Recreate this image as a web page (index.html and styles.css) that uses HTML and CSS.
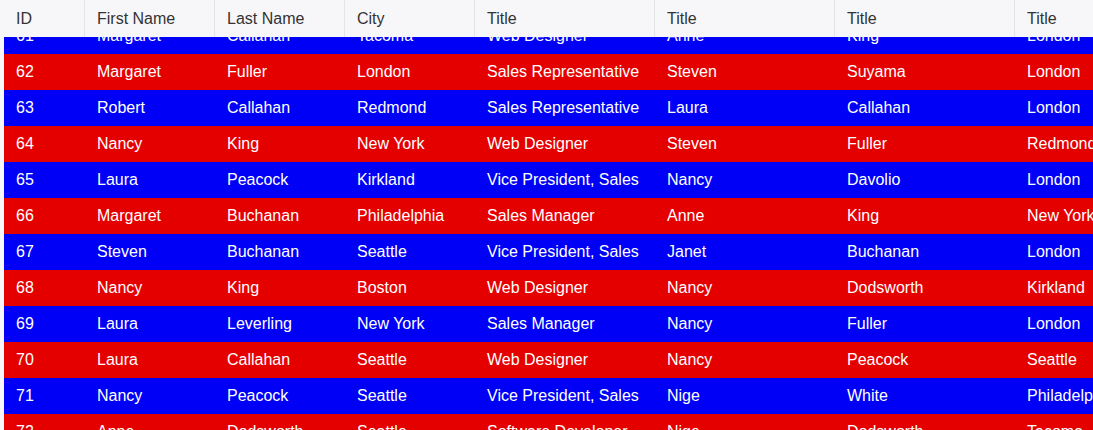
FILE: index.html
```html
<!DOCTYPE html>
<html>
<head>
<meta charset="utf-8">
<link rel="stylesheet" href="styles.css">
</head>
<body>
<div class="grid">
  <div class="head">
    <div class="hc">ID</div><div class="hc">First Name</div><div class="hc">Last Name</div><div class="hc">City</div><div class="hc">Title</div><div class="hc">Title</div><div class="hc">Title</div><div class="hc">Title</div>
  </div>
  <div class="viewport">
    <div class="rows">
      <div class="row blue"><div>61</div><div>Margaret</div><div>Callahan</div><div>Tacoma</div><div>Web Designer</div><div>Anne</div><div>King</div><div>London</div></div>
      <div class="row red"><div>62</div><div>Margaret</div><div>Fuller</div><div>London</div><div>Sales Representative</div><div>Steven</div><div>Suyama</div><div>London</div></div>
      <div class="row blue"><div>63</div><div>Robert</div><div>Callahan</div><div>Redmond</div><div>Sales Representative</div><div>Laura</div><div>Callahan</div><div>London</div></div>
      <div class="row red"><div>64</div><div>Nancy</div><div>King</div><div>New York</div><div>Web Designer</div><div>Steven</div><div>Fuller</div><div>Redmond</div></div>
      <div class="row blue"><div>65</div><div>Laura</div><div>Peacock</div><div>Kirkland</div><div>Vice President, Sales</div><div>Nancy</div><div>Davolio</div><div>London</div></div>
      <div class="row red"><div>66</div><div>Margaret</div><div>Buchanan</div><div>Philadelphia</div><div>Sales Manager</div><div>Anne</div><div>King</div><div>New York</div></div>
      <div class="row blue"><div>67</div><div>Steven</div><div>Buchanan</div><div>Seattle</div><div>Vice President, Sales</div><div>Janet</div><div>Buchanan</div><div>London</div></div>
      <div class="row red"><div>68</div><div>Nancy</div><div>King</div><div>Boston</div><div>Web Designer</div><div>Nancy</div><div>Dodsworth</div><div>Kirkland</div></div>
      <div class="row blue"><div>69</div><div>Laura</div><div>Leverling</div><div>New York</div><div>Sales Manager</div><div>Nancy</div><div>Fuller</div><div>London</div></div>
      <div class="row red"><div>70</div><div>Laura</div><div>Callahan</div><div>Seattle</div><div>Web Designer</div><div>Nancy</div><div>Peacock</div><div>Seattle</div></div>
      <div class="row blue"><div>71</div><div>Nancy</div><div>Peacock</div><div>Seattle</div><div>Vice President, Sales</div><div>Nige</div><div>White</div><div>Philadelphia</div></div>
      <div class="row red"><div>72</div><div>Anne</div><div>Dodsworth</div><div>Seattle</div><div>Software Developer</div><div>Nige</div><div>Dodsworth</div><div>Tacoma</div></div>
    </div>
  </div>
</div>
</body>
</html>
```
FILE: styles.css
```css
html, body {
  margin: 0;
  padding: 0;
  background: #f7f7f9;
  overflow: hidden;
}
body {
  font-family: "Liberation Sans", Arial, sans-serif;
  font-size: 16px;
  width: 1093px;
  height: 430px;
}
.grid {
  padding-left: 4px;
  height: 430px;
  display: flex;
  flex-direction: column;
  overflow: hidden;
}
.head, .row {
  display: grid;
  grid-template-columns: 81px 130px 130px 130px 180px 180px 180px 180px;
  width: max-content;
}
.head {
  height: 37px;
  background: #f7f7f9;
  position: relative;
  z-index: 1;
}
.hc {
  color: #333;
  padding-left: 12px;
  display: flex;
  align-items: center;
  border-right: 1px solid #e3e3e8;
  white-space: nowrap;
}
.viewport {
  flex: 1;
  overflow: hidden;
}
.rows {
  margin-top: -19px;
}
.row {
  height: 36px;
  color: #fff;
}
.row > div {
  padding-left: 12px;
  display: flex;
  align-items: center;
  white-space: nowrap;
}
.blue { background: #0000f6; }
.red { background: #e50000; }
```
